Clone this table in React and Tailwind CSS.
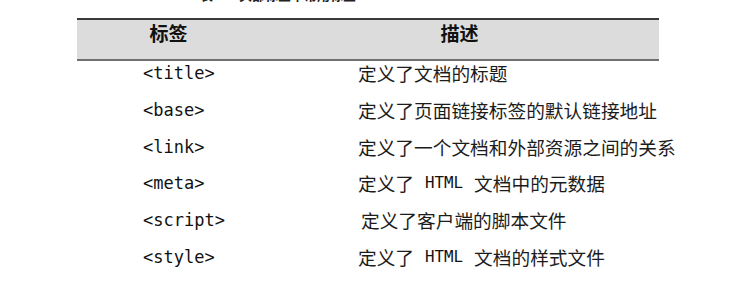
const rows = [
  { tag: '<title>', desc: ['定义了文档的标题'] },
  { tag: '<base>', desc: ['定义了页面链接标签的默认链接地址'] },
  { tag: '<link>', desc: ['定义了一个文档和外部资源之间的关系'] },
  { tag: '<meta>', desc: ['定义了', 'HTML', '文档中的元数据'] },
  { tag: '<script>', desc: ['定义了客户端的脚本文件'], shift: true },
  { tag: '<style>', desc: ['定义了', 'HTML', '文档的样式文件'] },
];

const cjk = "font-['Noto_Sans_CJK_SC',sans-serif]";
const mono = "font-['DejaVu_Sans_Mono',monospace]";

function Desc({ parts, shift }) {
  return (
    <div className={`flex items-center whitespace-nowrap pl-[98px] ${shift ? 'ml-[3px]' : ''}`}>
      <span className={`${cjk} text-[18.7px] text-[#1c1c1c]`}>{parts[0]}</span>
      {parts[1] && (
        <span className={`${mono} text-[15.8px] text-[#111] mx-[11px]`}>{parts[1]}</span>
      )}
      {parts[2] && (
        <span className={`${cjk} text-[18.7px] text-[#1c1c1c]`}>{parts[2]}</span>
      )}
    </div>
  );
}

export default function App() {
  return (
    <div className="w-[745px] h-[301px] bg-white overflow-hidden">
      <div className="h-[18px] overflow-hidden">
        <div className={`${cjk} -mt-[14px] pl-[200px] text-[13px] leading-[17px] font-bold text-[#222] whitespace-nowrap`}>
          表 1-1 头部标签中常用标签
        </div>
      </div>

      <div className="ml-[77px] w-[582px]">
        <div className="flex h-[43px] bg-[#dcdcdc] border-t-2 border-t-[#3a3a3a] border-b-2 border-b-[#707070] pt-[1px]">
          <div className={`w-[183px] text-center ${cjk} font-bold text-[19px] leading-[24px] text-[#111]`}>标签</div>
          <div className={`flex-1 text-center ${cjk} font-bold text-[19px] leading-[24px] text-[#111]`}>描述</div>
        </div>

        <div className="flex flex-col gap-[14.8px] pt-[1px]">
          {rows.map((r) => (
            <div key={r.tag} className="flex h-[22px] items-center leading-[22px] whitespace-nowrap">
              <div className={`w-[183px] shrink-0 pl-[66px] ${mono} text-[17px] text-[#111]`}>{r.tag}</div>
              <Desc parts={r.desc} shift={r.shift} />
            </div>
          ))}
        </div>
      </div>
    </div>
  );
}
